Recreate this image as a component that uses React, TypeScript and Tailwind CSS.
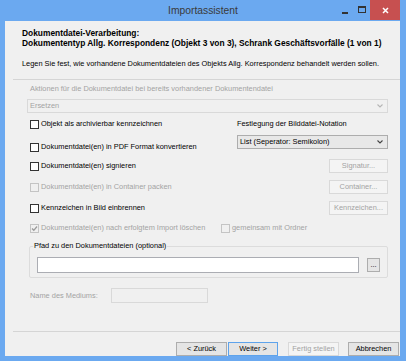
import React from "react";

const Check = ({ label, checked, disabled }: { label: string; checked?: boolean; disabled?: boolean }) => (
  <div className="flex items-center h-[10px]">
    <span
      className={
        "w-[9px] h-[9px] border flex items-center justify-center shrink-0 " +
        (disabled ? "border-[#c4c4c4] bg-[#f0f0f0]" : "border-[#333333] bg-white")
      }
    >
      {checked && (
        <svg width="7" height="7" viewBox="0 0 7 7">
          <polyline points="1,3.5 2.8,5.3 6,1.5" fill="none" stroke="#9a9a9a" strokeWidth="1.3" />
        </svg>
      )}
    </span>
    <span className={"ml-[2px] whitespace-nowrap " + (disabled ? "text-[#a3a3a3]" : "text-black")}>{label}</span>
  </div>
);

const Btn = ({ label, w = "w-[59px]", disabled, primary }: { label: string; w?: string; disabled?: boolean; primary?: boolean }) => (
  <div
    className={
      w +
      " h-[14px] border flex items-center justify-center whitespace-nowrap " +
      (disabled
        ? "border-[#d9d9d9] bg-[#f4f4f4] text-[#a3a3a3]"
        : primary
        ? "border-[#5ea3eb] bg-[#e5e5e5] text-black"
        : "border-[#adadad] bg-[#e5e5e5] text-black")
    }
  >
    {label}
  </div>
);

const Chevron = ({ color }: { color: string }) => (
  <svg width="6" height="4" viewBox="0 0 6 4">
    <polyline points="0.5,0.5 3,3 5.5,0.5" fill="none" stroke={color} strokeWidth="1.1" />
  </svg>
);

export default function App() {
  return (
    <div className="w-[406px] h-[361px] bg-[#6ba9f0] flex flex-col font-['Liberation_Sans',Arial,sans-serif] text-[7.4px] leading-[10px]">
      {/* title bar */}
      <div className="h-[21px] flex pr-[6px] shrink-0">
        <div className="w-[70px]" />
        <div className="flex-1 text-center text-[10.3px] leading-[21px] text-[#3a3a3a]">Importassistent</div>
        <div className="w-[64px] flex items-start">
          <div className="w-[17px] h-[20px] flex items-center justify-center">
            <div className="w-[6px] h-[1.5px] bg-[#333333] mt-[6px]" />
          </div>
          <div className="w-[17px] h-[20px] flex items-center justify-center">
            <div className="w-[8px] h-[7px] border border-t-2 border-[#333333] mt-[-2px]" />
          </div>
          <div className="w-[30px] h-[20px] bg-[#c75050] flex items-center justify-center">
            <svg width="7" height="7" viewBox="0 0 7 7">
              <path d="M1 1L6 6M6 1L1 6" stroke="white" strokeWidth="1.5" />
            </svg>
          </div>
        </div>
      </div>
      <div className="flex-1 pl-[5px] pr-[6px] pb-[6px] flex">
        <div className="flex-1 bg-[#f0f0f0] flex flex-col">
          {/* header */}
          <div className="pl-[17px] pt-[7px] font-bold text-[8.4px] text-black">
            <div>Dokumentdatei-Verarbeitung:</div>
            <div>Dokumententyp Allg. Korrespondenz (Objekt 3 von 3), Schrank Geschäftsvorfälle (1 von 1)</div>
          </div>
          <div className="pl-[17px] mt-[11px] text-black">
            Legen Sie fest, wie vorhandene Dokumentdateien des Objekts Allg. Korrespondenz behandelt werden sollen.
          </div>
          <div className="ml-[8px] mt-[10px] h-px bg-[#d5d5d5]" />

          {/* body */}
          <div className="pl-[22px] pr-[12px] flex flex-col">
            <div className="ml-[3px] mt-[4px] text-[#a3a3a3]">
              Aktionen für die Dokumentdatei bei bereits vorhandener Dokumentendatei
            </div>
            <div className="mt-[5px] h-[14px] border border-[#d9d9d9] bg-[#f0f0f0] flex items-center justify-between pl-[2px] pr-[4px] text-[#a3a3a3]">
              <span>Ersetzen</span>
              <Chevron color="#b5b5b5" />
            </div>

            <div className="mt-[5px] h-[12px] flex items-center justify-between">
              <div className="ml-[3px]">
                <Check label="Objekt als archivierbar kennzeichnen" />
              </div>
              <div className="w-[151px] text-black">Festlegung der Bilddatei-Notation</div>
            </div>

            <div className="mt-[5px] h-[17px] flex items-start justify-between">
              <div className="ml-[3px] mt-[7px]">
                <Check label="Dokumentdatei(en) in PDF Format konvertieren" />
              </div>
              <div className="w-[151px] h-[14px] border border-[#adadad] bg-[#e8e8e8] flex items-center justify-between pl-[2px] pr-[4px] text-black">
                <span>List (Seperator: Semikolon)</span>
                <Chevron color="#444444" />
              </div>
            </div>

            <div className="mt-[7px] h-[14px] flex items-center justify-between">
              <div className="ml-[3px]">
                <Check label="Dokumentdatei(en) signieren" />
              </div>
              <Btn label="Signatur..." disabled />
            </div>

            <div className="mt-[7px] h-[14px] flex items-center justify-between">
              <div className="ml-[3px]">
                <Check label="Dokumentdatei(en) in Container packen" disabled />
              </div>
              <Btn label="Container..." disabled />
            </div>

            <div className="mt-[7px] h-[14px] flex items-center justify-between">
              <div className="ml-[3px]">
                <Check label="Kennzeichen in Bild einbrennen" />
              </div>
              <Btn label="Kennzeichen..." disabled />
            </div>

            <div className="mt-[6px] h-[14px] flex items-center">
              <div className="ml-[3px] w-[191px]">
                <Check label="Dokumentdatei(en) nach erfolgtem Import löschen" checked disabled />
              </div>
              <Check label="gemeinsam mit Ordner" disabled />
            </div>

            <fieldset className="ml-[2px] mt-[6px] border border-[#dcdcdc] rounded-[2px] pl-[7px] pr-[7px] pt-[6px] pb-[4px]">
              <legend className="px-[1px] ml-[-4px] text-black">Pfad zu den Dokumentdateien (optional)</legend>
              <div className="flex items-center gap-[8px]">
                <div className="flex-1 h-[16px] bg-white border border-[#abadb3]" />
                <Btn label="..." w="w-[13px]" />
              </div>
            </fieldset>

            <div className="mt-[10px] h-[15px] flex items-center">
              <div className="ml-[3px] w-[81px] text-[#a3a3a3]">Name des Mediums:</div>
              <div className="w-[97px] h-[15px] border border-[#d9d9d9] bg-[#f0f0f0]" />
            </div>
          </div>

          <div className="ml-[8px] mt-[28px] h-px bg-[#d5d5d5]" />

          <div className="mt-[10px] flex justify-end pr-[1px]">
            <Btn label="< Zurück" w="w-[51px]" />
            <div className="w-[1px]" />
            <Btn label="Weiter >" w="w-[50px]" primary />
            <div className="w-[10px]" />
            <Btn label="Fertig stellen" w="w-[51px]" disabled />
            <div className="w-[9px]" />
            <Btn label="Abbrechen" w="w-[51px]" />
          </div>
        </div>
      </div>
    </div>
  );
}
